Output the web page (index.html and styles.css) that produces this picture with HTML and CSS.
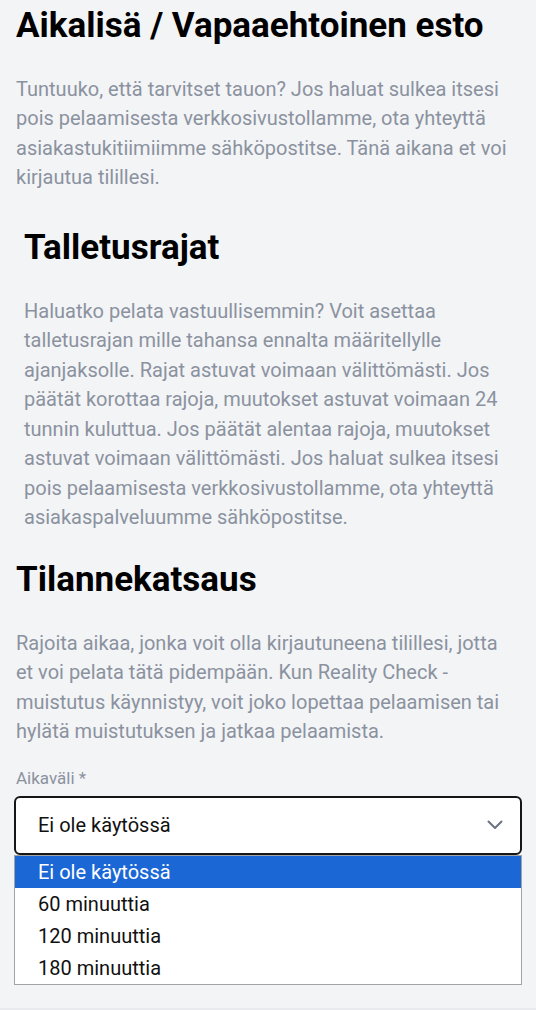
FILE: index.html
```html
<!DOCTYPE html>
<html lang="fi">
<head>
    <meta charset="UTF-8">
    <meta name="viewport" content="width=device-width, initial-scale=1.0">
    <title>Vastuullinen pelaaminen</title>
    <link rel="stylesheet" href="styles.css">
</head>
<body>

<main class="limits">
    <section class="block">
        <h2>Aikalisä / Vapaaehtoinen esto</h2>
        <p>Tuntuuko, että tarvitset tauon? Jos haluat sulkea itsesi pois pelaamisesta verkkosivustollamme, ota yhteyttä asiakastukitiimiimme sähköpostitse. Tänä aikana et voi kirjautua tilillesi.</p>
    </section>

    <section class="block block-inset">
        <h2>Talletusrajat</h2>
        <p>Haluatko pelata vastuullisemmin? Voit asettaa talletusrajan mille tahansa ennalta määritellylle ajanjaksolle. Rajat astuvat voimaan välittömästi. Jos päätät korottaa rajoja, muutokset astuvat voimaan 24 tunnin kuluttua. Jos päätät alentaa rajoja, muutokset astuvat voimaan välittömästi. Jos haluat sulkea itsesi pois pelaamisesta verkkosivustollamme, ota yhteyttä asiakaspalveluumme sähköpostitse.</p>
    </section>

    <section class="block">
        <h2>Tilannekatsaus</h2>
        <p>Rajoita aikaa, jonka voit olla kirjautuneena tilillesi, jotta et voi pelata tätä pidempään. Kun Reality Check -muistutus käynnistyy, voit joko lopettaa pelaamisen tai hylätä muistutuksen ja jatkaa pelaamista.</p>

        <div class="field">
            <label class="field-label">Aikaväli *</label>
            <div class="select">
                <div class="select-box">
                    <span>Ei ole käytössä</span>
                    <svg class="chevron" width="16" height="10" viewBox="0 0 16 10">
                        <path d="M1.5 1.5 L8 8 L14.5 1.5" fill="none" stroke="#6b7280" stroke-width="2" stroke-linecap="round" stroke-linejoin="round"/>
                    </svg>
                </div>
                <ul class="options">
                    <li class="selected">Ei ole käytössä</li>
                    <li>60 minuuttia</li>
                    <li>120 minuuttia</li>
                    <li>180 minuuttia</li>
                </ul>
            </div>
        </div>
    </section>
</main>

<div class="page-end"></div>

</body>
</html>
```

FILE: styles.css
```css
body {
    font-family: Roboto, 'Liberation Sans', sans-serif;
    background-color: #f3f4f6;
    margin: 0;
    color: #000;
}
.limits {
    padding: 0 16px 155px;
}
.block {
    padding-right: 5px;
}
.block h2 {
    font-size: 35px;
    font-weight: 700;
    line-height: 42px;
    margin: 5px 0 27.5px;
    color: #000;
}
.block p {
    font-size: 20px;
    line-height: 29.5px;
    color: #8b929f;
    margin: 0;
}
.block + .block h2 {
    margin-top: 34.5px;
}
.block-inset {
    padding-left: 8px;
}
.block-inset + .block h2 {
    margin-top: 26.5px;
}
.field {
    margin-top: 21.7px;
    margin-right: -5px;
}
.field-label {
    display: block;
    font-size: 17px;
    line-height: 20px;
    color: #8b929f;
    margin-bottom: 9.8px;
}
.select {
    position: relative;
}
.select-box {
    display: flex;
    align-items: center;
    justify-content: space-between;
    height: 55px;
    padding: 0 17px 0 22px;
    background-color: #fff;
    border-radius: 4px;
    outline: 2px solid #161616;
    font-size: 20px;
    color: #111;
}
.chevron {
    width: 16px;
    height: 10px;
}
/* the open list sits over the content below */
.options {
    position: absolute;
    top: 57px;
    left: -2px;
    right: -2px;
    list-style: none;
    margin: 0;
    padding: 0;
    background-color: #fff;
    border: 1px solid #a3a3a3;
    font-size: 20px;
    color: #111;
}
.options li {
    height: 32px;
    line-height: 32px;
    padding-left: 23px;
}
.options li.selected {
    background-color: #1a67d5;
    color: #fff;
}
.page-end {
    height: 40px;
    background-color: #e9eaed;
}
```
